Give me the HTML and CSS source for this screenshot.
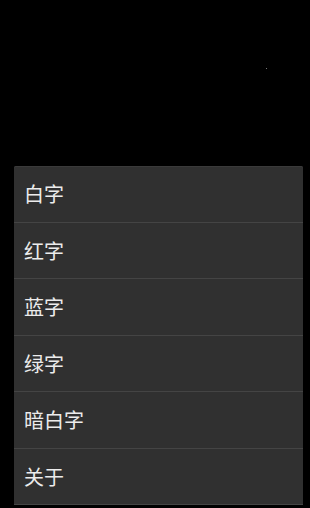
FILE: index.html
```html
<!DOCTYPE html>
<html lang="zh-CN">
<head>
  <meta charset="UTF-8" />
  <meta name="viewport" content="width=device-width, initial-scale=1" />
  <title>菜单</title>
  <link rel="stylesheet" href="styles.css">
</head>
<body>
  <div class="screen">
    <div class="backdrop">
      <span class="speck"></span>
    </div>
    <ul class="menu">
      <li>白字</li>
      <li>红字</li>
      <li>蓝字</li>
      <li>绿字</li>
      <li>暗白字</li>
      <li>关于</li>
    </ul>
  </div>
</body>
</html>
```

FILE: styles.css
```css
html, body {
  margin: 0;
  padding: 0;
  background: #000;
}
body {
  font-family: "Noto Sans CJK SC", "Noto Sans", sans-serif;
  width: 310px;
  height: 508px;
  overflow: hidden;
}
.screen {
  display: flex;
  flex-direction: column;
  height: 508px;
}
.backdrop {
  height: 166px;
  flex: none;
  position: relative;
}
.speck {
  position: absolute;
  left: 266px;
  top: 68px;
  width: 1px;
  height: 1px;
  background: #777;
}
.menu {
  list-style: none;
  margin: 0 7px 0 14px;
  padding: 0;
  background: #303030;
  border-radius: 2px 2px 0 0;
  box-shadow: inset 0 1px 0 #3a3a3a;
}
.menu li {
  height: 55.5px;
  line-height: 55px;
  padding-left: 10px;
  font-size: 20px;
  color: #ececec;
  border-bottom: 1px solid #444;
}
```
